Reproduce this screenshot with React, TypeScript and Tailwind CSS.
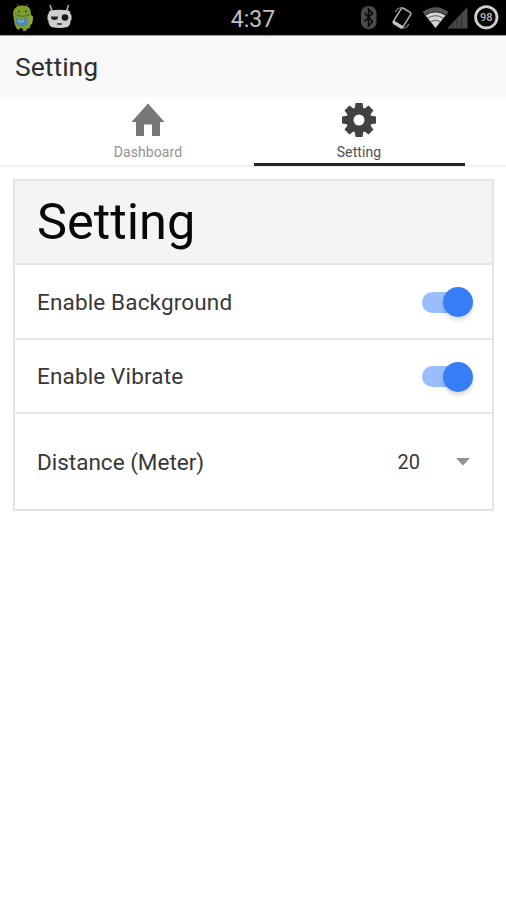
import type { ReactNode } from 'react'

type TabProps = {
  label: string
  active?: boolean
  children: ReactNode
}

function RobotIcon() {
  return (
    <svg className="absolute left-[11px] top-[2px]" width="24" height="30" viewBox="0 0 24 30">
      <path d="M6 2l3 4M17 2l-3 4" stroke="#55701f" strokeWidth="1" />
      <path d="M2 12C2 6 6 3.500 12 3.500S20 7 20 12l-.5 11c0 3-2 4-4 4l-.5 2h-3v-2l-3-1-1 2-2-1C3 23 3 17 2 12z" fill="#7d9d2e" />
      <path d="M18 14c3-2 4.500 0 4 3l-1 5-3 1z" fill="#8aa83c" />
      <path d="M4 12c4 3 12 3 15 0" stroke="#526f1b" fill="none" />
      <circle cx="8" cy="9.500" r="1" fill="#37501a" />
      <circle cx="15" cy="9.500" r="1" fill="#37501a" />
      <path d="M5 15.500l5 2 6-2v7l-6 2-5-3z" fill="#4c87b4" />
      <path d="M7 17l3 2 3-2v3l-3 1-3-1z" fill="#79a9cf" />
    </svg>
  )
}

function CyanogenIcon() {
  return (
    <svg className="absolute left-[46px] top-[4px]" width="27" height="25" viewBox="0 0 27 25">
      <path d="M4 1l2 6M22.500 1l-2 6" stroke="#b4b4b4" strokeWidth="1.500" />
      <path d="M4.500 6.500Q13.500 5 22.500 6.500q2 .5 2 3.500l1 1.500v4l-1 1.500q0 4-3 6-8 2-16 0-3-2-3-6l-1-1.500v-4l1-1.500q0-3 2-3.500z" fill="#cfcfcf" />
      <path d="M5 12.500h7q0 3.500-3.500 3.500T5 12.500z" fill="#222" />
      <circle cx="19" cy="13.500" r="3.300" fill="#181818" />
      <path d="M11 20h5" stroke="#222" strokeWidth="1.400" fill="none" />
    </svg>
  )
}

function StatusIcons() {
  return (
    <svg className="absolute left-[356px] top-0" width="150" height="35" viewBox="356 0 150 35">
      <rect x="361" y="6" width="15.500" height="23" rx="7" fill="#4a4a4a" />
      <path d="M364.500 13l8 8.500-4 4.500V9l4 4.500-8 8" fill="none" stroke="#050505" strokeWidth="1.500" />
      <g transform="rotate(32 402 18)">
        <rect x="396.500" y="9" width="11" height="18" rx="1.500" fill="#050505" stroke="#b5b5b5" strokeWidth="1.500" />
        <path d="M396.500 25.500h11" stroke="#c8c8c8" strokeWidth="2.500" />
      </g>
      <path d="M395 12l3-3.500 4-1M409 24l-3 3.500-4 1" fill="none" stroke="#777" strokeWidth="1.200" />
      <path d="M422.500 12q13-9.500 26 0l-2.500 3.200q-10.500-7.500-21 0z" fill="#555" />
      <path d="M425.500 15.500q10-6.500 20 0L435.500 28z" fill="#d5d5d5" />
      <path d="M427.500 18.200q8-5 16 0M430.500 21.700q5-3 10 0" fill="none" stroke="#555" strokeWidth="1" />
      <path d="M447 28.500L467.500 7v21.500z" fill="#484848" />
      <path d="M452.500 22v7M457 17v12M461.500 12v17" stroke="#2b2b2b" strokeWidth="1" />
      <circle cx="486.300" cy="17.300" r="10.700" fill="#060606" stroke="#cfcfcf" strokeWidth="2.800" />
      <text x="486.300" y="21.300" textAnchor="middle" className="font-['Roboto',sans-serif] text-[11px] font-medium" fill="#b8b8b8">98</text>
    </svg>
  )
}

function Tab({ label, active, children }: TabProps) {
  return (
    <div
      className={
        active
          ? 'flex w-[211px] flex-col items-center border-b-[3px] border-[#242424] text-[#505050]'
          : 'flex w-[211px] flex-col items-center border-b-[3px] border-transparent text-[#929292]'
      }
    >
      <div className="mt-[5px] h-9">{children}</div>
      <span className="mt-[5px] text-[14px] leading-[18px] tracking-[0.1px]">{label}</span>
    </div>
  )
}

function Toggle() {
  return (
    <div className="mt-[2px] flex h-[30px] w-[51px] items-center">
      <div className="flex h-[21px] w-[49px] items-center justify-end rounded-full bg-[#9abdfb]">
        <div className="-mr-[2px] size-[30px] shrink-0 rounded-full bg-[#377ef6] shadow-[0_3px_4px_rgba(0,0,0,0.16)]" />
      </div>
    </div>
  )
}

function ToggleRow({ label }: { label: string }) {
  return (
    <div className="flex h-[74.5px] items-center justify-between border-b-2 border-[#e4e4e4] pl-[22px] pr-[19px]">
      <span className="mt-[3px] text-[22.5px] tracking-[0.15px]">{label}</span>
      <Toggle />
    </div>
  )
}

export default function App() {
  return (
    <div className="h-[900px] w-[506px] overflow-hidden bg-white font-['Roboto',sans-serif] text-[#383838]">
      <div className="relative flex h-[35px] items-center justify-center bg-black">
        <RobotIcon />
        <CyanogenIcon />
        <span className="mt-[3px] text-[23px] leading-none text-[#c2c2c2]">4:37</span>
        <StatusIcons />
      </div>

      <header className="flex h-[62px] items-center border-t border-[#999] bg-[#f8f8f8] pl-[15px]">
        <h1 className="mt-[2px] text-[26.5px] leading-none text-[#303030]">Setting</h1>
      </header>

      <nav className="h-[70px] border-b-2 border-[#f0f0f0]">
        <div className="flex h-[69px] justify-center pl-px">
          <Tab label="Dashboard">
            <svg width="34" height="36" viewBox="0 0 34 36">
              <path d="M17 1.500L33.500 20H29v14h-8V22.500h-8V34H5V20H.5z" fill="#777" />
            </svg>
          </Tab>
          <Tab label="Setting" active>
            <svg width="34" height="36" viewBox="-17 -18 34 36">
              <g fill="#424242">
                <circle r="12.800" />
                <path d="M-3.500-17h7l1 7h-9zM-3.500 17h7l1-7h-9z" />
                <path d="M-3.500-17h7l1 7h-9zM-3.500 17h7l1-7h-9z" transform="rotate(45)" />
                <path d="M-3.500-17h7l1 7h-9zM-3.500 17h7l1-7h-9z" transform="rotate(90)" />
                <path d="M-3.500-17h7l1 7h-9zM-3.500 17h7l1-7h-9z" transform="rotate(135)" />
              </g>
              <circle r="5.500" fill="#fff" />
            </svg>
          </Tab>
        </div>
      </nav>

      <main className="ml-[13px] mt-3 w-[481px] border-2 border-[#e4e4e4]">
        <div className="flex h-[84px] items-center border-b-2 border-[#e4e4e4] bg-[#f4f4f4] pl-[22px]">
          <h2 className="text-[50.5px] leading-none text-[#080808]">Setting</h2>
        </div>
        <ToggleRow label="Enable Background" />
        <ToggleRow label="Enable Vibrate" />
        <div className="flex h-[95px] items-center pl-[22px] pr-[22px]">
          <span className="mt-[2px] flex-1 text-[22.5px]">Distance (Meter)</span>
          <span className="mr-9 mt-px text-[20px]">20</span>
          <svg width="14" height="8" viewBox="0 0 14 8">
            <path d="M0 0h14L7 7.500z" fill="#929292" />
          </svg>
        </div>
      </main>
    </div>
  )
}
